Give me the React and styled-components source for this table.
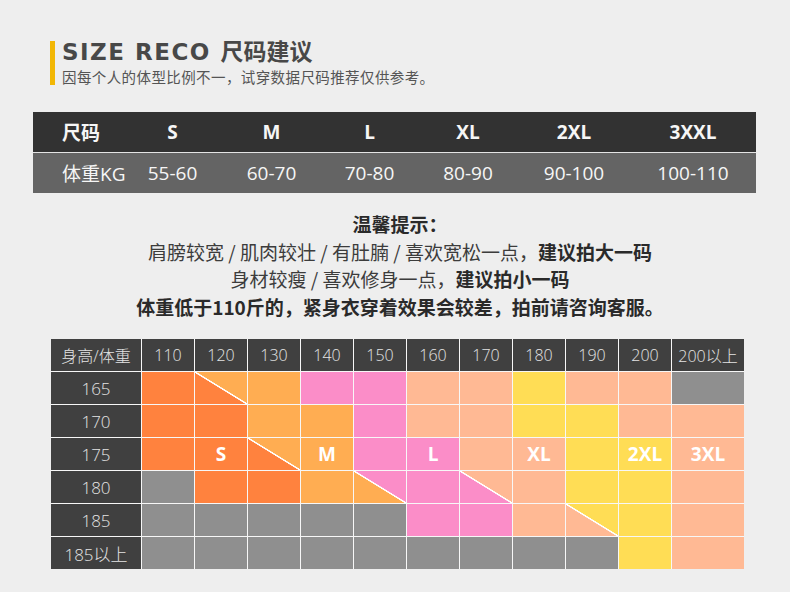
import React from "react";
import styled, { createGlobalStyle } from "styled-components";

const GlobalStyle = createGlobalStyle`
  body {
    margin: 0;
    background: #eeeeee;
    font-family: "Open Sans", "Noto Sans CJK SC", sans-serif;
  }
`;

const COLORS = {
  O: "#ff823e",
  A: "#ffad52",
  P: "#fb8dc8",
  C: "#ffb994",
  Y: "#ffdd55",
  G: "#8f8f8f",
};

const sizes = [
  { name: "S", kg: "55-60" },
  { name: "M", kg: "60-70" },
  { name: "L", kg: "70-80" },
  { name: "XL", kg: "80-90" },
  { name: "2XL", kg: "90-100" },
  { name: "3XXL", kg: "100-110" },
];

const weights = ["110", "120", "130", "140", "150", "160", "170", "180", "190", "200", "200以上"];

// each cell: color code, "top/bottom" for a split cell, optional label after ":"
const chart = [
  { h: "165", cells: ["O", "A/O", "A", "P", "P", "C", "C", "Y", "C", "C", "G"] },
  { h: "170", cells: ["O", "O", "A", "A", "P", "C", "C", "Y", "Y", "C", "C"] },
  { h: "175", cells: ["O", "O:S", "A/O", "A:M", "P", "P:L", "C", "C:XL", "Y", "Y:2XL", "C:3XL"] },
  { h: "180", cells: ["G", "O", "O", "A", "P/A", "P", "C/P", "C", "Y", "Y", "C"] },
  { h: "185", cells: ["G", "G", "G", "G", "G", "P", "P", "C", "Y/C", "Y", "C"] },
  { h: "185以上", cells: ["G", "G", "G", "G", "G", "G", "G", "G", "G", "Y", "C"] },
];

function App() {
  return (
    <Page>
      <GlobalStyle />
      <Header>
        <Bar />
        <HeadText>
          <Title>
            SIZE RECO <TitleCn>尺码建议</TitleCn>
          </Title>
          <Subtitle>因每个人的体型比例不一，试穿数据尺码推荐仅供参考。</Subtitle>
        </HeadText>
      </Header>

      <SizeTable>
        <SizeRow $dark>
          <SizeLabel $bold>尺码</SizeLabel>
          {sizes.map((s) => (
            <SizeCell key={s.name} $bold>
              {s.name}
            </SizeCell>
          ))}
        </SizeRow>
        <SizeRow>
          <SizeLabel>体重KG</SizeLabel>
          {sizes.map((s) => (
            <SizeCell key={s.name}>{s.kg}</SizeCell>
          ))}
        </SizeRow>
      </SizeTable>

      <Tips>
        <TipLine>
          <strong>温馨提示：</strong>
        </TipLine>
        <TipLine>
          肩膀较宽 / 肌肉较壮 / 有肚腩 / 喜欢宽松一点，<strong>建议拍大一码</strong>
        </TipLine>
        <TipLine>
          身材较瘦 / 喜欢修身一点，<strong>建议拍小一码</strong>
        </TipLine>
        <TipLine>
          <strong>体重低于110斤的，紧身衣穿着效果会较差，拍前请咨询客服。</strong>
        </TipLine>
      </Tips>

      <Chart>
        <HeadCell>身高/体重</HeadCell>
        {weights.map((w) => (
          <HeadCell key={w}>{w}</HeadCell>
        ))}
        {chart.map((row) => (
          <React.Fragment key={row.h}>
            <HeadCell $row>{row.h}</HeadCell>
            {row.cells.map((c, i) => {
              const [color, label] = c.split(":");
              const [top, bottom] = color.split("/");
              return (
                <Cell key={i} $top={COLORS[top]} $bottom={bottom ? COLORS[bottom] : null}>
                  {label}
                </Cell>
              );
            })}
          </React.Fragment>
        ))}
      </Chart>
    </Page>
  );
}

const Page = styled.div`
  width: 790px;
  padding-top: 38px;
  padding-bottom: 23px;
`;

const Header = styled.div`
  display: flex;
  margin-left: 50px;
`;

const Bar = styled.div`
  width: 5px;
  margin-top: 3px;
  background: #f2b705;
`;

const HeadText = styled.div`
  display: flex;
  flex-direction: column;
  padding-left: 7px;
`;

const Title = styled.div`
  font-family: "DejaVu Sans", "Noto Sans CJK SC", sans-serif;
  font-weight: 700;
  font-size: 23px;
  line-height: 24px;
  letter-spacing: 1.5px;
  color: #484848;
`;

const TitleCn = styled.span`
  font-family: "Noto Sans CJK SC", sans-serif;
  font-weight: 700;
  letter-spacing: 0;
`;

const Subtitle = styled.div`
  margin-top: 5px;
  font-family: "Noto Sans CJK SC", sans-serif;
  font-size: 14.5px;
  line-height: 16px;
  letter-spacing: 0.4px;
  color: #555555;
`;

const SizeTable = styled.div`
  display: flex;
  flex-direction: column;
  gap: 1px;
  width: 723px;
  margin: 27px 0 0 33px;
  background: #e4e4e4;
`;

const SizeRow = styled.div`
  display: grid;
  grid-template-columns: 90px 99px 99px 97px 100px 112px 126px;
  align-items: center;
  height: 40px;
  background: ${(p) => (p.$dark ? "#323232" : "#646464")};
  color: #f6f6f6;
  font-size: 19px;
`;

const SizeLabel = styled.div`
  padding-left: 29px;
  white-space: nowrap;
  font-weight: ${(p) => (p.$bold ? 700 : 400)};
`;

const SizeCell = styled.div`
  text-align: center;
  font-weight: ${(p) => (p.$bold ? 700 : 400)};
`;

const Tips = styled.div`
  margin-top: 17px;
  padding-left: 10px;
  text-align: center;
  font-family: "Noto Sans CJK SC", sans-serif;
  font-size: 19px;
  line-height: 27.5px;
  color: #3c3c3c;

  strong {
    color: #2a2a2a;
    font-weight: 700;
  }
`;

const TipLine = styled.div``;

const Chart = styled.div`
  display: grid;
  grid-template-columns: 90px repeat(10, 52px) 72px;
  grid-auto-rows: 32px;
  gap: 1px;
  width: 693px;
  margin: 19px 0 0 51px;
  background: #f7f7f7;
`;

const HeadCell = styled.div`
  display: flex;
  align-items: center;
  justify-content: center;
  background: #404040;
  color: #e4e4e4;
  font-size: ${(p) => (p.$row ? "17px" : "16px")};
  font-weight: 300;
  white-space: nowrap;
`;

const Cell = styled.div`
  display: flex;
  align-items: center;
  justify-content: center;
  background: ${(p) =>
    p.$bottom
      ? `linear-gradient(to top right, ${p.$bottom} calc(50% - 1px), #ffffff calc(50% - 0.5px), #ffffff calc(50% + 0.5px), ${p.$top} calc(50% + 1px))`
      : p.$top};
  color: #ffffff;
  font-size: 19px;
  font-weight: 700;
`;

export default App;
